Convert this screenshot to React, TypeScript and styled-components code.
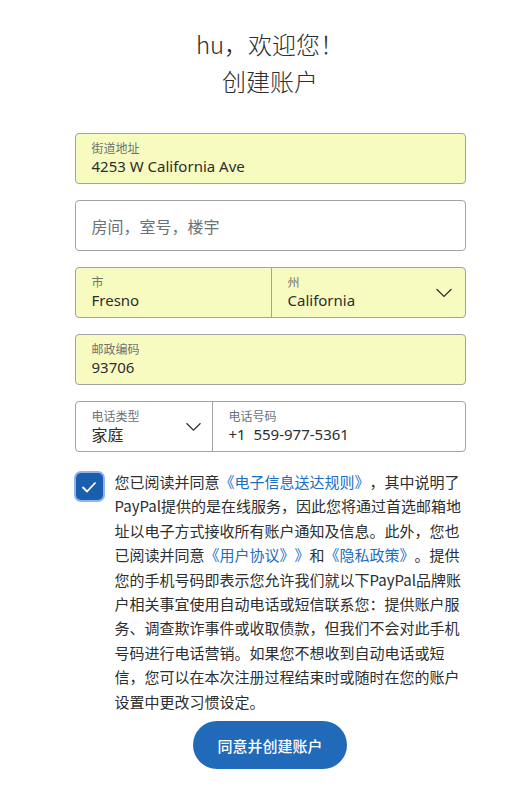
import React from "react";
import styled, { createGlobalStyle } from "styled-components";

const Global = createGlobalStyle`
  html, body { margin: 0; padding: 0; background: #ffffff; overflow: hidden; }
  body {
    font-family: "Noto Sans", "Noto Sans CJK SC", sans-serif;
    color: #2c2e2f;
  }
`;

const Page = styled.div`
  width: 500px;
  padding-left: 20px;
  display: flex;
  flex-direction: column;
  align-items: center;
`;

const Title = styled.h1`
  margin: 25px 0 0;
  font-family: "Noto Sans CJK SC", sans-serif;
  font-weight: 200;
  font-size: 24px;
  line-height: 37px;
  text-align: center;
  color: #2c2e2f;
  text-spacing-trim: space-all;
`;

const Form = styled.div`
  margin-top: 34px;
  width: 391px;
  display: flex;
  flex-direction: column;
  gap: 16px;
`;

const Box = styled.div<{ $filled?: boolean; $cols?: string }>`
  box-sizing: border-box;
  height: 51px;
  border: 1px solid #9da3a6;
  border-radius: 4px;
  background: ${(p) => (p.$filled ? "#f8fbbf" : "#ffffff")};
  display: grid;
  grid-template-columns: ${(p) => p.$cols || "1fr"};
  overflow: hidden;
`;

const Cell = styled.div<{ $divider?: boolean }>`
  position: relative;
  display: flex;
  flex-direction: column;
  justify-content: center;
  padding: 0 16px;
  border-left: ${(p) => (p.$divider ? "1px solid #9da3a6" : "none")};
  min-width: 0;
`;

const Label = styled.div`
  font-family: "Noto Sans CJK SC", sans-serif;
  font-size: 12px;
  line-height: 16px;
  color: #6c7378;
`;

const Value = styled.div<{ $cjk?: boolean }>`
  font-family: ${(p) =>
    p.$cjk ? `"Noto Sans CJK SC", sans-serif` : `"Noto Sans", "Noto Sans CJK SC", sans-serif`};
  font-size: ${(p) => (p.$cjk ? "16px" : "15px")};
  line-height: 21px;
  color: #2c2e2f;
  white-space: pre;
`;

const Placeholder = styled.div`
  font-family: "Noto Sans CJK SC", sans-serif;
  font-size: 16px;
  line-height: 22px;
  color: #6c7378;
  text-spacing-trim: space-all;
`;

const Chevron = styled.svg<{ $right: number }>`
  position: absolute;
  right: ${(p) => p.$right}px;
  top: 50%;
  transform: translateY(-50%);
`;

const Consent = styled.div`
  margin-top: 18px;
  width: 391px;
  display: flex;
  gap: 12px;
  align-items: flex-start;
`;

const CheckWrap = styled.div`
  flex: none;
  margin-top: 3px;
  margin-left: 1px;
  width: 27px;
  height: 27px;
  box-sizing: border-box;
  border-radius: 5px;
  background: #1b5eae;
  box-shadow: 0 0 0 2px #8fb6ec;
  display: flex;
  align-items: center;
  justify-content: center;
`;

const ConsentText = styled.p`
  margin: 0;
  width: 350px;
  font-family: "Noto Sans CJK SC", sans-serif;
  font-size: 15px;
  line-height: 24.4px;
  color: #2c2e2f;
  text-spacing-trim: space-all;
`;

const Link = styled.a`
  color: #1a6ec4;
  text-decoration: none;
`;

const Button = styled.button`
  margin-top: 7px;
  height: 48px;
  padding: 0 24px;
  border: none;
  border-radius: 24px;
  background: #2169b9;
  color: #ffffff;
  font-family: "Noto Sans CJK SC", sans-serif;
  font-size: 15px;
  font-weight: 500;
  cursor: pointer;
`;

const Down = ({ right, w }: { right: number; w: number }) => (
  <Chevron $right={right} width={w} height={w / 2 + 1} viewBox={`0 0 ${w} ${w / 2 + 1}`}>
    <polyline
      points={`0.5,0.5 ${w / 2},${w / 2} ${w - 0.5},0.5`}
      fill="none"
      stroke="#2c2e2f"
      strokeWidth="1.2"
    />
  </Chevron>
);

export default function App() {
  return (
    <Page>
      <Global />
      <Title>
        hu，欢迎您！
        <br />
        创建账户
      </Title>
      <Form>
        <Box $filled>
          <Cell>
            <Label>街道地址</Label>
            <Value>4253 W California Ave</Value>
          </Cell>
        </Box>
        <Box>
          <Cell>
            <Placeholder>房间，室号，楼宇</Placeholder>
          </Cell>
        </Box>
        <Box $filled $cols="195px 1fr">
          <Cell>
            <Label>市</Label>
            <Value>Fresno</Value>
          </Cell>
          <Cell $divider>
            <Label>州</Label>
            <Value>California</Value>
            <Down right={13} w={16} />
          </Cell>
        </Box>
        <Box $filled>
          <Cell>
            <Label>邮政编码</Label>
            <Value>93706</Value>
          </Cell>
        </Box>
        <Box $cols="136px 1fr">
          <Cell>
            <Label>电话类型</Label>
            <Value $cjk>家庭</Value>
            <Down right={11} w={15} />
          </Cell>
          <Cell $divider>
            <Label>电话号码</Label>
            <Value>{"+1  559-977-5361"}</Value>
          </Cell>
        </Box>
      </Form>
      <Consent>
        <CheckWrap>
          <svg width="16" height="12" viewBox="0 0 16 12">
            <polyline points="1.5,6 6,10.5 14.5,1.5" fill="none" stroke="#ffffff" strokeWidth="1.8" />
          </svg>
        </CheckWrap>
        <ConsentText>
          您已阅读并同意<Link>《电子信息送达规则》</Link>，其中说明了PayPal提供的是在线服务，因此您将通过首选邮箱地址以电子方式接收所有账户通知及信息。此外，您也已阅读并同意
          <Link>《用户协议》》</Link>和<Link>《隐私政策》</Link>。提供您的手机号码即表示您允许我们就以下PayPal品牌账户相关事宜使用自动电话或短信联系您：提供账户服务、调查欺诈事件或收取债款，但我们不会对此手机号码进行电话营销。如果您不想收到自动电话或短信，您可以在本次注册过程结束时或随时在您的账户设置中更改习惯设定。
        </ConsentText>
      </Consent>
      <Button>同意并创建账户</Button>
    </Page>
  );
}
